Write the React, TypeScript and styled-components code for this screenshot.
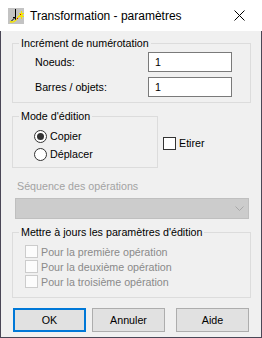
import React, { useState } from "react";
import styled, { createGlobalStyle } from "styled-components";

const GlobalStyle = createGlobalStyle`
  html, body {
    margin: 0;
    padding: 0;
    background: #ffffff;
  }
  body {
    font-family: "Liberation Sans", Arial, sans-serif;
    font-size: 10.7px;
    color: #000000;
  }
  * {
    box-sizing: border-box;
  }
`;

const Window = styled.div`
  width: 262px;
  height: 338px;
  display: flex;
  flex-direction: column;
  background: #f0f0f0;
`;

const TitleBar = styled.div`
  height: 31px;
  background: #ffffff;
  display: flex;
  align-items: center;
  padding-left: 8px;
  flex-shrink: 0;
`;

const TitleText = styled.span`
  margin-left: 6px;
  font-size: 12px;
  line-height: 16px;
  flex: 1;
`;

const CloseBtn = styled.div`
  width: 46px;
  height: 31px;
  display: flex;
  align-items: center;
  justify-content: center;
`;

const Body = styled.div`
  flex: 1;
  border-left: 1px solid #4a4756;
  border-right: 1px solid #4a4756;
  border-bottom: 1px solid #4a4756;
  padding: 4px 0 0 11px;
  display: flex;
  flex-direction: column;
`;

const Group = styled.fieldset<{ $w: number; $mt?: number }>`
  margin: ${(p) => p.$mt ?? 0}px 0 0 0;
  width: ${(p) => p.$w}px;
  min-width: 0;
  border: 1px solid #dcdcdc;
  padding: 0;
`;

const Legend = styled.legend`
  margin-left: 6px;
  padding: 0 2px;
  line-height: 16px;
`;

const FieldGrid = styled.div`
  display: grid;
  grid-template-columns: 113px 84px;
  row-gap: 5px;
  padding: 1px 0 5px 22px;
  align-items: center;
`;

const FieldLabel = styled.span`
  line-height: 20px;
`;

const TextBox = styled.div`
  height: 20px;
  border: 1px solid #7a7a7a;
  background: #ffffff;
  padding-left: 6px;
  line-height: 18px;
`;

const ModeRow = styled.div`
  display: flex;
  align-items: flex-start;
  margin-top: 5px;
`;

const OptionList = styled.div<{ $pt: number; $pb: number; $pl: number; $lh: number }>`
  display: flex;
  flex-direction: column;
  padding: ${(p) => p.$pt}px 0 ${(p) => p.$pb}px ${(p) => p.$pl}px;
  & > * {
    height: ${(p) => p.$lh}px;
  }
`;

const Option = styled.label<{ $disabled?: boolean }>`
  display: flex;
  align-items: center;
  gap: 3px;
  line-height: 16px;
  color: ${(p) => (p.$disabled ? "#8a8a8a" : "#000000")};
`;

const RadioCircle = styled.span<{ $checked?: boolean }>`
  width: 13px;
  height: 13px;
  border-radius: 50%;
  border: 1px solid #333333;
  background: #ffffff;
  display: flex;
  align-items: center;
  justify-content: center;
  &::after {
    content: "";
    width: 7px;
    height: 7px;
    border-radius: 50%;
    background: #333333;
    display: ${(p) => (p.$checked ? "block" : "none")};
  }
`;

const CheckSquare = styled.span<{ $disabled?: boolean }>`
  width: 13px;
  height: 13px;
  border: 1px solid ${(p) => (p.$disabled ? "#cccccc" : "#333333")};
  background: ${(p) => (p.$disabled ? "#fcfcfc" : "#ffffff")};
  flex-shrink: 0;
`;

const StretchBox = styled.div`
  margin-top: 27px;
  margin-left: 5px;
`;

const DisabledLabel = styled.div`
  margin: 10px 0 0 5px;
  line-height: 16px;
  color: #a3a3a3;
`;

const Combo = styled.div`
  margin: 4px 0 0 3px;
  width: 234px;
  height: 21px;
  background: #cccccc;
  border: 1px solid #bfbfbf;
  display: flex;
  align-items: center;
  justify-content: flex-end;
  padding-right: 4px;
`;

const ButtonRow = styled.div`
  display: flex;
  margin-top: 10px;
`;

const Button = styled.button<{ $default?: boolean; $ml: number }>`
  margin-left: ${(p) => p.$ml}px;
  width: 73px;
  height: 24px;
  background: #e1e1e1;
  border: ${(p) => (p.$default ? "2px solid #0078d7" : "1px solid #adadad")};
  font-family: "Liberation Sans", Arial, sans-serif;
  font-size: 10.7px;
  color: #000000;
  padding: 0;
`;

const AppIcon = () => (
  <svg width="16" height="16" viewBox="0 0 16 16">
    <rect x="0" y="0" width="16" height="16" fill="#c3c3c3" />
    <path d="M7.5 1 L7.5 9" stroke="#000" strokeWidth="1" fill="none" />
    <path d="M7.5 9 L2.5 14 M5 9.5 L7.5 9.5 M7.5 9.5 L7.5 12" stroke="#000" strokeWidth="1" fill="none" />
    <path d="M2 13.5 C5 15 8 13 9.5 10 C10.5 8 12.5 6.5 15 7" stroke="#f5e600" strokeWidth="1.4" fill="none" />
    <path d="M13.5 3 L13.5 11 M11 5.5 L16 5.5 M11 8.5 L16 8.5" stroke="#f5e600" strokeWidth="1" fill="none" />
    <rect x="9" y="10" width="1" height="1" fill="#e00000" />
    <rect x="12" y="6" width="1" height="1" fill="#e00000" />
  </svg>
);

const CloseIcon = () => (
  <svg width="11" height="11" viewBox="0 0 11 11">
    <path d="M0.5 0.5 L10.5 10.5 M10.5 0.5 L0.5 10.5" stroke="#000" strokeWidth="1" />
  </svg>
);

const Chevron = () => (
  <svg width="9" height="6" viewBox="0 0 9 6">
    <path d="M0.5 0.5 L4.5 4.5 L8.5 0.5" stroke="#a8a8a8" strokeWidth="1" fill="none" />
  </svg>
);

const App = () => {
  const [mode, setMode] = useState("copier");

  return (
    <>
      <GlobalStyle />
      <Window>
        <TitleBar>
          <AppIcon />
          <TitleText>Transformation - paramètres</TitleText>
          <CloseBtn>
            <CloseIcon />
          </CloseBtn>
        </TitleBar>
        <Body>
          <Group $w={239}>
            <Legend>Incrément de numérotation</Legend>
            <FieldGrid>
              <FieldLabel>Noeuds:</FieldLabel>
              <TextBox>1</TextBox>
              <FieldLabel>Barres / objets:</FieldLabel>
              <TextBox>1</TextBox>
            </FieldGrid>
          </Group>

          <ModeRow>
            <Group $w={146}>
              <Legend>Mode d'édition</Legend>
              <OptionList $pt={3} $pb={4} $pl={21} $lh={18}>
                <Option onClick={() => setMode("copier")}>
                  <RadioCircle $checked={mode === "copier"} />
                  Copier
                </Option>
                <Option onClick={() => setMode("deplacer")}>
                  <RadioCircle $checked={mode === "deplacer"} />
                  Déplacer
                </Option>
              </OptionList>
            </Group>
            <StretchBox>
              <Option>
                <CheckSquare />
                Etirer
              </Option>
            </StretchBox>
          </ModeRow>

          <DisabledLabel>Séquence des opérations</DisabledLabel>
          <Combo>
            <Chevron />
          </Combo>

          <Group $w={239} $mt={5}>
            <Legend>Mettre à jours les paramètres d'édition</Legend>
            <OptionList $pt={4} $pb={8} $pl={12} $lh={15}>
              <Option $disabled>
                <CheckSquare $disabled />
                Pour la première opération
              </Option>
              <Option $disabled>
                <CheckSquare $disabled />
                Pour la deuxième opération
              </Option>
              <Option $disabled>
                <CheckSquare $disabled />
                Pour la troisième opération
              </Option>
            </OptionList>
          </Group>

          <ButtonRow>
            <Button $default $ml={1}>OK</Button>
            <Button $ml={6}>Annuler</Button>
            <Button $ml={11}>Aide</Button>
          </ButtonRow>
        </Body>
      </Window>
    </>
  );
};

export default App;
